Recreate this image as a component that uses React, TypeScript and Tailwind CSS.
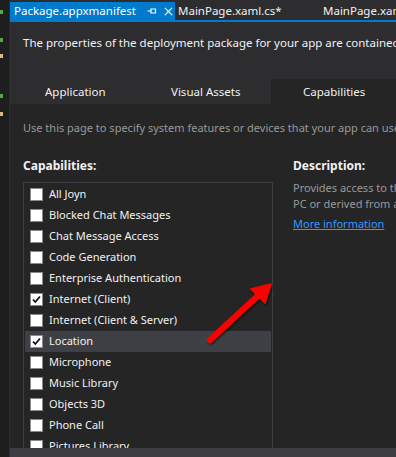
import { ReactNode } from "react";

const caps: { name: string; checked?: boolean; selected?: boolean }[] = [
	{ name: "All Joyn" },
	{ name: "Blocked Chat Messages" },
	{ name: "Chat Message Access" },
	{ name: "Code Generation" },
	{ name: "Enterprise Authentication" },
	{ name: "Internet (Client)", checked: true },
	{ name: "Internet (Client & Server)" },
	{ name: "Location", checked: true, selected: true },
	{ name: "Microphone" },
	{ name: "Music Library" },
	{ name: "Objects 3D" },
	{ name: "Phone Call" },
	{ name: "Pictures Library" },
];

const CheckBox = ({ checked }: { checked?: boolean }) => (
	<div className="w-[13px] h-[13px] bg-white border border-[#8a8a8a] flex items-center justify-center shrink-0">
		{checked && (
			<svg viewBox="0 0 11 11" className="w-[11px] h-[11px]">
				<path d="M2 5.5 L4.3 8 L9 2.5" fill="none" stroke="#111" strokeWidth="1.8" />
			</svg>
		)}
	</div>
);

const PinIcon = () => (
	<svg viewBox="0 0 10 10" className="w-[10px] h-[10px]">
		<path d="M0.5 5 H4 M4 2.5 V7.5 M4 3 H8.5 V7 H4" fill="none" stroke="#fff" strokeWidth="1.2" />
	</svg>
);

const CloseIcon = () => (
	<svg viewBox="0 0 10 10" className="w-[9px] h-[9px]">
		<path d="M1 1 L9 9 M9 1 L1 9" fill="none" stroke="#fff" strokeWidth="1.4" />
	</svg>
);

const Mark = ({ color, mt }: { color: string; mt: string }) => (
	<div className={`w-[3px] h-[4px] ${mt}`} style={{ backgroundColor: color }} />
);

const Row = ({ children, selected }: { children: ReactNode; selected?: boolean }) => (
	<div className={`h-[21px] flex items-center gap-[6px] pl-[5px] ${selected ? "bg-[#3f3f46]" : ""}`}>
		{children}
	</div>
);

export default function App() {
	return (
		<div
			className="w-[396px] h-[457px] flex overflow-hidden bg-[#252526] text-[11px] text-[#f1f1f1]"
			style={{ fontFamily: '"Noto Sans", "Open Sans", sans-serif' }}
		>
			{/* editor margin strip */}
			<div className="w-[10px] shrink-0 bg-[#1e1e1e] border-r border-[#2d2d30] flex flex-col">
				<Mark color="#57a64a" mt="mt-[10px]" />
				<Mark color="#57a64a" mt="mt-[24px]" />
				<Mark color="#d7ba7d" mt="mt-[12px]" />
				<Mark color="#57a64a" mt="mt-[36px]" />
				<Mark color="#d7ba7d" mt="mt-[14px]" />
			</div>

			<div className="flex-1 min-w-0 flex flex-col">
				{/* document tabs */}
				<div className="h-[20px] shrink-0 bg-[#2d2d30] flex items-end whitespace-nowrap text-[11.5px]">
					<div className="h-[18px] w-[165px] shrink-0 bg-[#007acc] flex items-center pl-[4px] text-white">
						<span>Package.appxmanifest</span>
						<span className="ml-[11px] flex"><PinIcon /></span>
						<span className="ml-[7px] flex"><CloseIcon /></span>
					</div>
					<div className="h-[18px] flex items-center pl-[3px] w-[148px] shrink-0">MainPage.xaml.cs*</div>
					<div className="h-[18px] flex items-center">MainPage.xaml.cs</div>
				</div>
				<div className="h-[2px] shrink-0 bg-[#007acc]" />

				{/* header */}
				<div className="bg-[#2d2d30] shrink-0 text-[11.5px]">
					<div className="h-[57px] pl-[13px] pt-[12px] whitespace-nowrap">
						The properties of the deployment package for your app are contained in this file.
					</div>
					<div className="h-[25px] flex whitespace-nowrap">
						<div className="w-[126px] pl-[35px] flex items-center">Application</div>
						<div className="w-[135px] pl-[35px] flex items-center">Visual Assets</div>
						<div className="flex-1 bg-[#252526] pl-[32px] flex items-center">Capabilities</div>
					</div>
				</div>

				{/* content */}
				<div className="flex-1 min-h-0 flex flex-col pl-[13px]">
					<div className="pt-[16px] h-[52px] text-[#999999] whitespace-nowrap">
						Use this page to specify system features or devices that your app can use.
					</div>
					<div className="flex-1 min-h-0 flex gap-[20px]">
						<div className="w-[250px] shrink-0 flex flex-col">
							<div className="font-bold text-[12px] h-[26px] pt-[1px]">Capabilities:</div>
							<div className="flex-1 min-h-0 border-t border-l border-r border-[#3f3f46] px-[1px] pt-[1px] overflow-hidden">
								{caps.map((c) => (
									<Row key={c.name} selected={c.selected}>
										<CheckBox checked={c.checked} />
										<span className="whitespace-nowrap">{c.name}</span>
									</Row>
								))}
							</div>
						</div>
						<div className="flex-1 min-w-0 whitespace-nowrap">
							<div className="font-bold text-[12px] h-[19px] pt-[1px]">Description:</div>
							<div className="text-[#999999] leading-[16px] pt-[5px]">
								<div>Provides access to the current location, which is obtained from dedicated</div>
								<div>PC or derived from available network information.</div>
							</div>
							<div className="mt-[4px] text-[#3399ff] underline">More information</div>
						</div>
					</div>
				</div>
				<div className="h-[9px] shrink-0 bg-[#3e3e42]" />
			</div>

			{/* annotation arrow */}
			<svg className="absolute left-0 top-0 pointer-events-none" width="396" height="457">
				<defs>
					<filter id="sh" x="-20%" y="-20%" width="140%" height="140%">
						<feDropShadow dx="1" dy="1.5" stdDeviation="1.2" floodColor="#000" floodOpacity="0.6" />
					</filter>
				</defs>
				<g filter="url(#sh)">
					<line x1="210" y1="340" x2="262" y2="292" stroke="#ff0000" strokeWidth="6" strokeLinecap="round" />
					<path d="M271 284 L251 289 L265 303 Z" fill="#ff0000" stroke="#ff0000" strokeWidth="1.5" strokeLinejoin="round" />
				</g>
			</svg>
		</div>
	);
}
